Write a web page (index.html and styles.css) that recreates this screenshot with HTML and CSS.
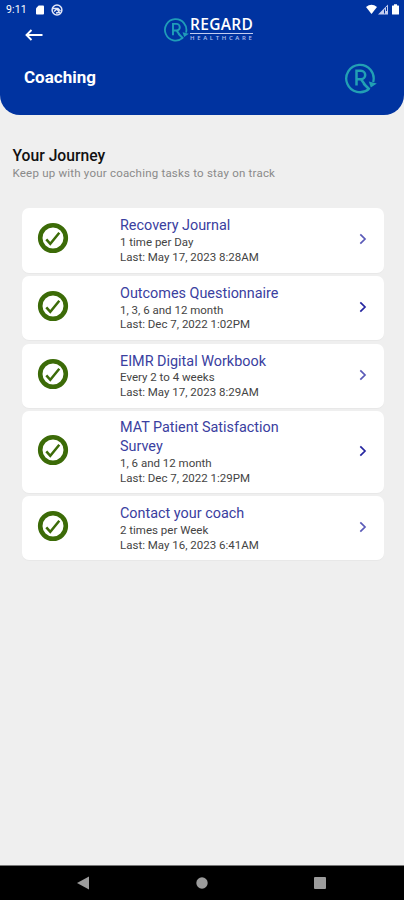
FILE: index.html
```
<!DOCTYPE html>
<html lang="en">
<head>
<meta charset="utf-8">
<title>Coaching</title>
<link rel="stylesheet" href="styles.css">
</head>
<body>
<svg width="0" height="0" class="defs">
  <symbol id="mark" viewBox="0 0 32 32">
    <path d="M24 26.800A13.700 13.700 0 1 1 28.200 20" fill="none" stroke="currentColor" stroke-width="2.300"/>
    <path d="M23.800 19.500L31.800 21.500L25.800 25.500Z" fill="currentColor"/>
    <path d="M11.500 23.500V8.800H16A4.200 4.200 0 0 1 16 17.200H11.500M16 17.200L20.500 23.500M18.500 21.500L24.500 27.500" fill="none" stroke="currentColor" stroke-width="2.500"/>
  </symbol>
  <symbol id="check" viewBox="0 0 32 32">
    <circle cx="16" cy="16" r="12.800" fill="#fff" stroke="#3c6b08" stroke-width="4.600"/>
    <path d="M9.300 17.300L13.300 21.800L22.300 10.800" fill="none" stroke="#3c6b08" stroke-width="2.500"/>
  </symbol>
  <symbol id="chevron" viewBox="0 0 8 12">
    <path d="M1.300 1.300L6 6L1.300 10.700" fill="none" stroke="currentColor" stroke-width="1.700"/>
  </symbol>
</svg>
<header class="header">
  <div class="status">
    <span class="time">9:11</span>
    <svg class="sd" viewBox="0 0 9 10"><path d="M3 0H8Q9 0 9 1V9Q9 10 8 10H1Q0 10 0 9V3Z" fill="#fff"/></svg>
    <svg class="sync" viewBox="0 0 12 12"><circle cx="6" cy="6" r="4.900" fill="none" stroke="#e4e8f8" stroke-width="1.500"/><path d="M2 4.500H7L9.500 7M3 7.500L6 5L8.500 8.500L5 9" fill="none" stroke="#e4e8f8" stroke-width="1.300"/></svg>
    <svg class="signals" viewBox="0 0 34 12"><path d="M0 3Q5.500-1.500 11 3L5.500 10Z" fill="#fff"/><path d="M12 10.500L22 .500V10.500Z" fill="#c4cdef"/><path d="M18.500 5.500V9.500M20.500 3V7" stroke="#0033a0" stroke-width="1"/><path d="M26.500 1.500H28V.300H31V1.500H32.500Q33 1.500 33 2V10Q33 10.500 32.500 10.500H26.500Q26 10.500 26 10V2Q26 1.500 26.500 1.500Z" fill="#fff"/></svg>
  </div>
  <div class="brandbar">
    <svg class="back" viewBox="0 0 18 12"><path d="M17.500 6H1.500M6.500 1L1.500 6L6.500 11" fill="none" stroke="#fff" stroke-width="1.900"/></svg>
    <div class="brand">
      <svg class="brand-mark"><use href="#mark"/></svg>
      <div class="words"><div class="name">REGARD</div><div class="rule"></div><div class="sub">HEALTHCARE</div></div>
    </div>
  </div>
  <div class="titlebar"><h1>Coaching</h1><svg class="big-mark"><use href="#mark"/></svg></div>
</header>
<main>
  <h2>Your Journey</h2>
  <p class="lead">Keep up with your coaching tasks to stay on track</p>
  <div class="list">
    <div class="card"><svg class="check"><use href="#check"/></svg><div class="text"><h3>Recovery Journal</h3><p>1 time per Day</p><p>Last: May 17, 2023 8:28AM</p></div><svg class="chev soft"><use href="#chevron"/></svg></div>
    <div class="card"><svg class="check"><use href="#check"/></svg><div class="text"><h3>Outcomes Questionnaire</h3><p>1, 3, 6 and 12 month</p><p>Last: Dec 7, 2022 1:02PM</p></div><svg class="chev"><use href="#chevron"/></svg></div>
    <div class="card"><svg class="check"><use href="#check"/></svg><div class="text"><h3>EIMR Digital Workbook</h3><p>Every 2 to 4 weeks</p><p>Last: May 17, 2023 8:29AM</p></div><svg class="chev soft"><use href="#chevron"/></svg></div>
    <div class="card"><svg class="check"><use href="#check"/></svg><div class="text"><h3>MAT Patient Satisfaction Survey</h3><p>1, 6 and 12 month</p><p>Last: Dec 7, 2022 1:29PM</p></div><svg class="chev"><use href="#chevron"/></svg></div>
    <div class="card"><svg class="check"><use href="#check"/></svg><div class="text"><h3>Contact your coach</h3><p>2 times per Week</p><p>Last: May 16, 2023 6:41AM</p></div><svg class="chev soft"><use href="#chevron"/></svg></div>
  </div>
</main>
<nav class="nav">
  <svg viewBox="0 0 14 14"><path d="M13 .500V13.500L1 7Z" fill="#9c9c9c"/></svg>
  <svg viewBox="0 0 14 14"><circle cx="7" cy="7" r="5.700" fill="#9c9c9c"/></svg>
  <svg viewBox="0 0 14 14"><rect x="1" y="1" width="12" height="12" rx="1" fill="#9c9c9c"/></svg>
</nav>
</body>
</html>
```
FILE: styles.css
```
* { box-sizing: border-box; }
body {
  margin: 0;
  width: 404px;
  height: 900px;
  display: flex;
  flex-direction: column;
  overflow: hidden;
  background: #efefef;
  font-family: Roboto, sans-serif;
}
h1, h2, h3, p { margin: 0; font-weight: 400; }
svg { display: block; flex: none; }
.defs { position: absolute; }
.header {
  height: 115px;
  flex: none;
  background: #0033a0;
  border-radius: 0 0 20px 20px;
  color: #fff;
}
.status { height: 18px; padding: 1px 4px 0 6px; display: flex; align-items: center; }
.time { font-size: 10.5px; width: 30px; letter-spacing: .1px; }
.sd { width: 8px; height: 10px; }
.sync { width: 12px; height: 12px; margin-left: 7px; }
.signals { width: 34px; height: 12px; margin-left: auto; }
.brandbar { height: 30px; display: flex; padding-left: 25px; }
.back { width: 18px; height: 12px; margin-top: 10.5px; }
.brand { display: flex; margin-left: 121px; }
.brand-mark { width: 25px; height: 25px; margin-top: -1px; color: #1f9cb8; }
.words { margin: -3px 0 0 1px; width: 64px; }
.name {
  font: 600 15.500px/18px "Open Sans", sans-serif;
  letter-spacing: .3px;
}
.rule { height: 1px; width: 63px; background: #c4cdef; }
.sub { font: 600 6px/9px "Open Sans", sans-serif; letter-spacing: 2.65px; color: #b4c0ec; white-space: nowrap; }
.titlebar { display: flex; align-items: center; justify-content: space-between; padding: 0 27px 0 24px; height: 60px; }
.titlebar h1 { font-size: 17px; font-weight: 700; line-height: 20px; margin-top: -3px; }
.big-mark { width: 32px; height: 32px; color: #22a0b4; }
main { flex: 1; padding: 31px 20.500px 0 12.500px; }
h2 { font-size: 15.700px; line-height: 20px; font-weight: 500; color: #111; }
.lead { font-size: 11.5px; letter-spacing: .21px; line-height: 16px; margin-top: -1px; color: #8a8a8a; }
.list { display: flex; flex-direction: column; gap: 3.300px; margin: 27.300px 0 0 9px; }
.card {
  display: flex;
  align-items: center;
  min-height: 64.400px;
  padding: 7.500px 16px 7.500px 15px;
  background: #fff;
  border-radius: 7px;
  box-shadow: 0 1px 1px rgba(0, 0, 0, .03);
}
.check { width: 32px; height: 32px; margin-top: -4px; }
.text { width: 185px; margin-left: 51.500px; }
h3 { font-size: 14.400px; line-height: 18.500px; color: #3a40a0; position: relative; top: .6px; }
.text p { font-size: 11.5px; line-height: 14.700px; color: #444; }
.chev { width: 8px; height: 12px; margin-left: auto; margin-right: 1px; margin-top: -2px; color: #2626a0; }
.soft { color: #5a5ab8; }
.nav {
  height: 35px;
  flex: none;
  background: #000;
  border-top: 1px solid #777;
  display: flex;
  justify-content: space-between;
  align-items: center;
  padding: 0 77px 0 76px;
}
.nav svg { width: 14px; height: 14px; }
```
